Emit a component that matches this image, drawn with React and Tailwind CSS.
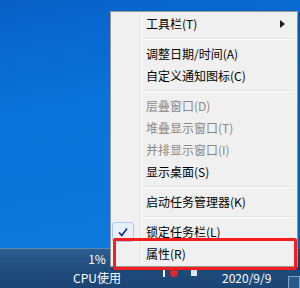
import { Fragment } from "react";

const font = { fontFamily: '"Noto Sans CJK SC", "Noto Sans", sans-serif' };

const items = [
  { label: "工具栏(T)", submenu: true },
  "sep",
  { label: "调整日期/时间(A)" },
  { label: "自定义通知图标(C)" },
  "sep",
  { label: "层叠窗口(D)", disabled: true },
  { label: "堆叠显示窗口(T)", disabled: true },
  { label: "并排显示窗口(I)", disabled: true },
  { label: "显示桌面(S)" },
  "sep",
  { label: "启动任务管理器(K)" },
  "sep",
  { label: "锁定任务栏(L)", checked: true },
  { label: "属性(R)" },
];

const Gutter = ({ children }) => (
  <div className="flex h-full w-[29px] shrink-0 items-center border-r border-r-[#e2e3e3] shadow-[1px_0_0_#ffffff]">
    {children}
  </div>
);

const CheckBox = () => (
  <div className="flex h-[20px] w-[22px] items-center justify-center rounded-[3px] border border-[#a8caf2] bg-[#e8f0fc]">
    <svg width="10" height="10" viewBox="0 0 10 10">
      <path d="M1 5.5 L3.8 8.5 L9 1.5" fill="none" stroke="#13278a" strokeWidth="1.6" />
    </svg>
  </div>
);

const MenuItem = ({ label, disabled, checked, submenu }) => (
  <div className="flex h-[22px] items-center">
    <Gutter>{checked && <CheckBox />}</Gutter>
    <span
      className={`ml-[5px] flex-1 text-[12px] leading-none ${disabled ? "text-[#8a8a8a]" : "text-black"}`}
    >
      {label}
    </span>
    {submenu && (
      <svg width="5" height="8" viewBox="0 0 5 8" className="mr-[11px]">
        <path d="M0 0 L5 4 L0 8 Z" fill="#1a1a1a" />
      </svg>
    )}
  </div>
);

const Separator = () => (
  <div className="flex h-[8px] items-center">
    <Gutter />
    <div className="ml-[1px] mr-[2px] flex-1 border-t border-t-[#e0e0e0] border-b border-b-white" />
  </div>
);

export default function App() {
  return (
    <div
      className="relative flex h-[288px] w-[300px] flex-col overflow-hidden bg-[linear-gradient(170deg,#0860c6_0%,#0a74da_35%,#0d7bdc_100%)]"
      style={font}
    >
      <div className="flex-1" />

      {/* taskbar */}
      <div className="flex h-[40px] items-start border-t border-t-[#5d86ad] bg-[linear-gradient(180deg,#2c5f91_0%,#1f4c7c_50%,#1b4575_100%)] text-white">
        <div className="ml-[72px] flex w-[50px] flex-col items-center text-[12px] leading-[19px]">
          <span>1%</span>
          <span>CPU使用</span>
        </div>
        <div className="ml-[41px] mt-[20px] flex items-center gap-[5px]">
          <div className="h-[7px] w-[2px] bg-white" />
          <div className="h-[8px] w-[8px] rounded-full bg-[#e02828]" />
          <div className="ml-[8px] h-[6px] w-[6px] bg-[#dfe6ee]" />
        </div>
        <div className="ml-[25px] mt-[21px] text-[12px] leading-[16px]">2020/9/9</div>
        <div className="ml-auto mt-[27px] h-[14px] w-[12px] border border-[#7ea3c8] bg-[#2a5a8a]" />
      </div>

      {/* context menu */}
      <div className="absolute left-[110px] top-[11px] w-[188px] border border-[#979797] bg-[#f0f0f0] p-[1px] shadow-[2px_2px_3px_rgba(0,0,0,0.3)]">
        {items.map((it, i) => (
          <Fragment key={i}>{it === "sep" ? <Separator /> : <MenuItem {...it} />}</Fragment>
        ))}
      </div>

      {/* highlight */}
      <div className="absolute left-[113px] top-[238px] h-[32px] w-[184px] rounded-[2px] border-[3px] border-[#f51d1d]" />
    </div>
  );
}
